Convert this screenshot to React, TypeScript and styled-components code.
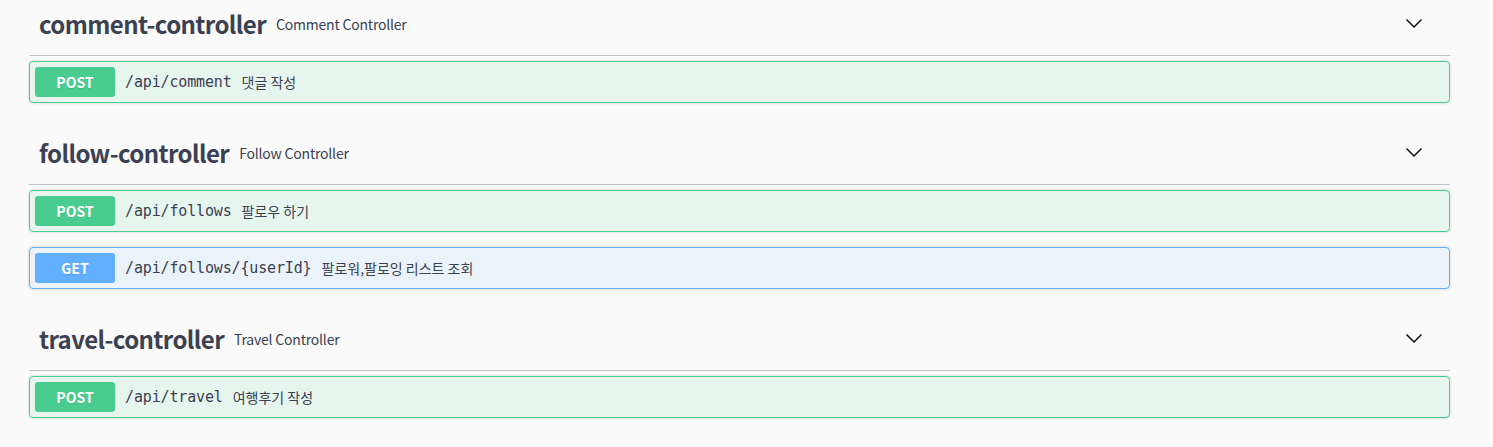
import React from "react";
import styled, { createGlobalStyle } from "styled-components";

const GlobalStyle = createGlobalStyle`
  html, body { margin: 0; padding: 0; background: #fafafa; }
  body { font-family: "Noto Sans", "Noto Sans CJK KR", sans-serif; color: #3b4151; }
`;

const Page = styled.div`
  margin-top: -11px;
  padding: 0 43px 0 29px;
`;

const Section = styled.section`
  display: flex;
  flex-direction: column;
`;

const TagHeading = styled.h3`
  box-sizing: border-box;
  height: 67px;
  margin: 0 0 5px;
  padding: 11px 20px 8px 10px;
  display: flex;
  align-items: center;
  border-bottom: 1px solid rgba(59, 65, 81, 0.3);
  font-weight: normal;
`;

const TagName = styled.span`
  font-family: "Noto Sans CJK KR", "Noto Sans", sans-serif;
  font-size: 24px;
  font-weight: 700;
  color: #3b4151;
  letter-spacing: -0.6px;
  margin-top: -1px;
`;

const TagDesc = styled.small`
  flex: 1;
  padding: 0 10px;
  font-family: "Noto Sans CJK KR", "Noto Sans", sans-serif;
  font-size: 14px;
  letter-spacing: -0.2px;
  color: #3b4151;
`;

const Expand = styled.button`
  border: none;
  background: none;
  padding: 0;
  margin: 0 6px 2px 0;
  display: flex;
  align-items: center;
  cursor: pointer;
`;

const Op = styled.div<{ $color: string; $bg: string }>`
  box-sizing: border-box;
  height: 42px;
  margin: 0 0 15px;
  border: 1px solid ${(p) => p.$color};
  background: ${(p) => p.$bg};
  border-radius: 4px;
  box-shadow: 0 0 3px rgba(0, 0, 0, 0.19);
  display: flex;
  align-items: center;
  padding: 0 5px;
`;

const Method = styled.span<{ $color: string }>`
  width: 80px;
  height: 30px;
  border-radius: 3px;
  background: ${(p) => p.$color};
  color: #fff;
  font-family: "Noto Sans CJK KR", "Noto Sans", sans-serif;
  font-size: 14px;
  font-weight: 700;
  display: flex;
  align-items: center;
  justify-content: center;
  text-shadow: 0 1px 0 rgba(0, 0, 0, 0.1);
`;

const Path = styled.span`
  padding: 0 10px;
  font-family: "DejaVu Sans Mono", "Liberation Mono", monospace;
  font-size: 15px;
  letter-spacing: -0.15px;
  font-weight: 500;
  color: #3b4151;
`;

const Desc = styled.span`
  font-family: "Noto Sans CJK KR", "Noto Sans", sans-serif;
  font-size: 14px;
  color: #3b4151;
`;

const Chevron = () => (
  <svg width="20" height="20" viewBox="0 0 20 20">
    <polyline
      points="2.5,6.5 10,14 17.5,6.5"
      fill="none"
      stroke="#111"
      strokeWidth="1.5"
    />
  </svg>
);

const POST = { color: "#49cc90", bg: "rgba(73,204,144,.1)" };
const GET = { color: "#61affe", bg: "rgba(97,175,254,.1)" };

type OpT = { method: "POST" | "GET"; path: string; desc: string };
type TagT = { name: string; desc: string; ops: OpT[] };

const tags: TagT[] = [
  {
    name: "comment-controller",
    desc: "Comment Controller",
    ops: [{ method: "POST", path: "/api/comment", desc: "댓글 작성" }],
  },
  {
    name: "follow-controller",
    desc: "Follow Controller",
    ops: [
      { method: "POST", path: "/api/follows", desc: "팔로우 하기" },
      { method: "GET", path: "/api/follows/{userId}", desc: "팔로워,팔로잉 리스트 조회" },
    ],
  },
  {
    name: "travel-controller",
    desc: "Travel Controller",
    ops: [{ method: "POST", path: "/api/travel", desc: "여행후기 작성" }],
  },
];

export default function App() {
  return (
    <>
      <GlobalStyle />
      <Page>
        {tags.map((t) => (
          <Section key={t.name}>
            <TagHeading>
              <TagName>{t.name}</TagName>
              <TagDesc>{t.desc}</TagDesc>
              <Expand aria-label="expand">
                <Chevron />
              </Expand>
            </TagHeading>
            {t.ops.map((o) => {
              const c = o.method === "POST" ? POST : GET;
              return (
                <Op key={o.path + o.method} $color={c.color} $bg={c.bg}>
                  <Method $color={c.color}>{o.method}</Method>
                  <Path>{o.path}</Path>
                  <Desc>{o.desc}</Desc>
                </Op>
              );
            })}
          </Section>
        ))}
      </Page>
    </>
  );
}
